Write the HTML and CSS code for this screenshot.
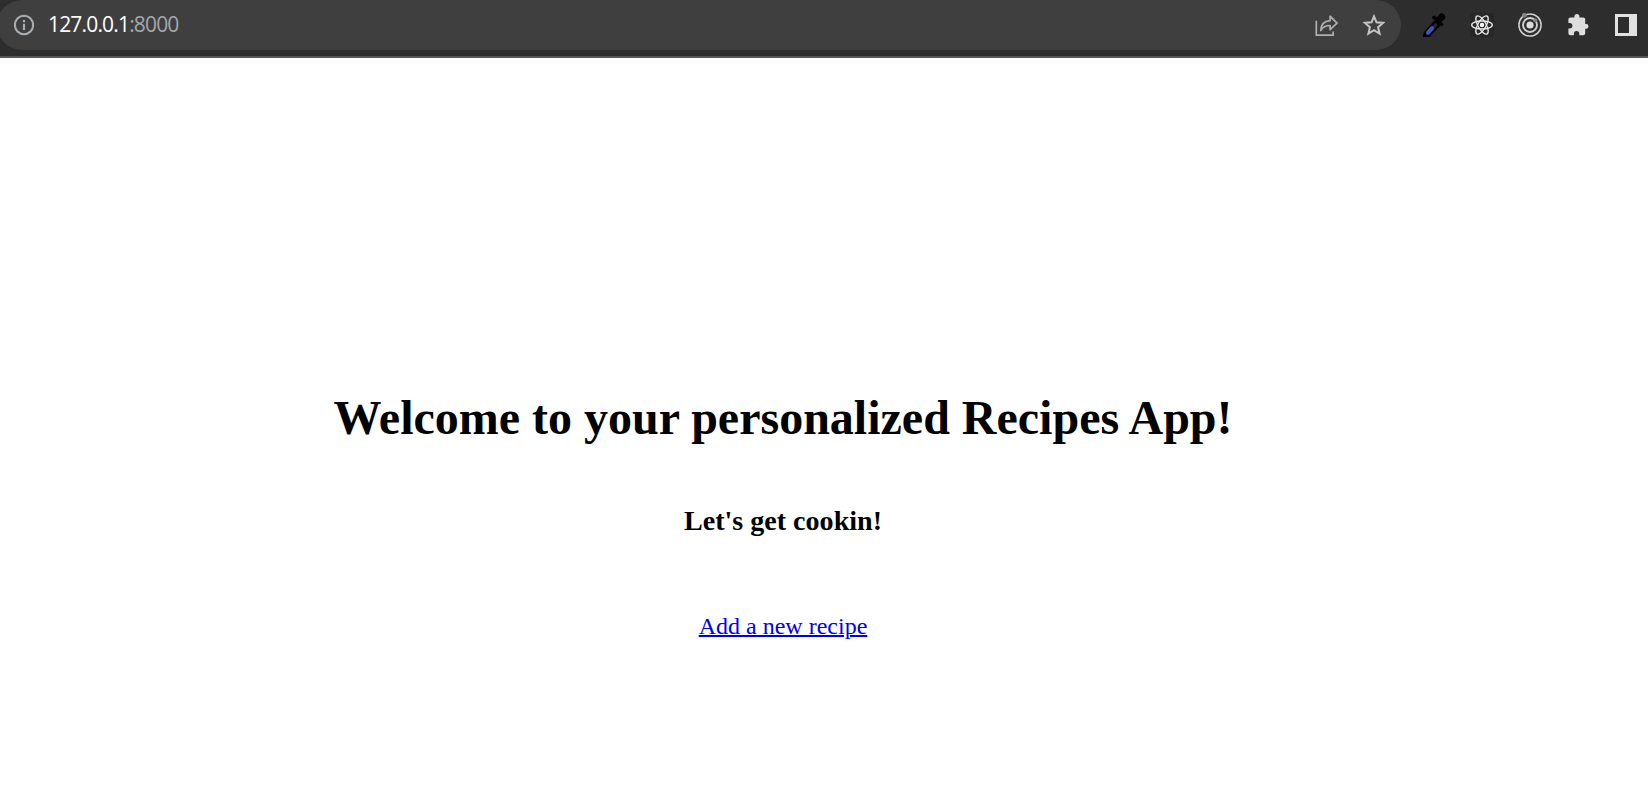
FILE: index.html
```html
<!DOCTYPE html>
<html lang="en">
<head>
<meta charset="utf-8">
<title>Recipes App</title>
<link rel="stylesheet" href="styles.css">
</head>
<body>
<header class="toolbar">
  <div class="address">
    <svg class="info" width="22" height="22" viewBox="0 0 22 22"><circle cx="11" cy="11" r="9.2" fill="none" stroke="#a9adb1" stroke-width="2.1"/><path d="M9.9 9.7h2.2v6.3h-2.2zM9.9 6h2.2v2.2h-2.2z" fill="#a9adb1"/></svg>
    <span class="url"><span class="host">127.0.0.1</span><span class="port">:8000</span></span>
    <svg class="share" width="24" height="24" viewBox="0 0 24 24" fill="none" stroke="#b0b0b0" stroke-width="1.7"><path d="M2.3 7.8V22.2H19.1V18.4"/><path d="M6.8 17.5C7 11.8 9.6 8.2 16.1 7.7V3.2L23 10.2L16.1 16.6V12.5C11.4 12.4 8.8 14.2 6.8 17.5Z" stroke-linejoin="round"/></svg>
    <svg class="star" width="24" height="24" viewBox="0 0 24 24"><path d="M12 3.3L14.5 9.3L21.1 9.9L16.1 14.2L17.6 20.7L12 17.2L6.4 20.7L7.9 14.2L2.9 9.9L9.5 9.3Z" fill="none" stroke="#c4c4c4" stroke-width="2"/></svg>
  </div>
  <div class="extensions">
    <svg width="24" height="24" viewBox="0 0 24 24"><path d="M2.3 22.9L3 19.5L13.5 8L17.4 12L7 22.9Z" fill="#25252b" stroke="#000" stroke-width="2.5"/><path d="M6.1 19.6L10 15.2" stroke="#3b56c4" stroke-width="4.2" stroke-linecap="round"/><path d="M10.5 3.5L12.5 2.4L15.2 4.2L18 .7Q20-.2 22 1.2Q24 3 22.8 5.8L19.5 9L21.6 11.5L19.8 13.4L10 5Z" fill="#000"/></svg>
    <svg width="24" height="24" viewBox="0 0 24 24"><path d="M0 0H24V24H0Z" fill="#272727"/><g fill="none" stroke="#e8e8e8" stroke-width="1.35"><ellipse cx="12" cy="12" rx="10.3" ry="4"/><ellipse cx="12" cy="12" rx="10.3" ry="4" transform="rotate(60 12 12)"/><ellipse cx="12" cy="12" rx="10.3" ry="4" transform="rotate(120 12 12)"/></g><circle cx="12" cy="12" r="2.2" fill="#fff"/></svg>
    <svg width="24" height="24" viewBox="0 0 24 24"><g fill="none" stroke="#d0d0d0"><circle cx="12" cy="12" r="11.1" stroke-width="1.5"/><circle cx="12" cy="12" r="7" stroke-width="1.9"/></g><circle cx="12" cy="12" r="3.6" fill="#dcdcdc"/><circle cx="6.4" cy="2.3" r="2.4" fill="#858585"/><circle cx="17.2" cy="7.2" r="2" fill="#858585"/></svg>
    <svg width="24" height="24" viewBox="0 0 24 24"><path d="M19.7 11H18.8V6.5C18.8 5.4 17.9 4.5 16.8 4.5H13V3.5A2.5 2.5 0 0 0 8 3.5V4.5H4C2.9 4.5 2 5.4 2 6.5V10.1H3.3A2.7 2.7 0 0 1 3.3 15.5H2V20.2C2 21.3 2.9 22.2 4 22.2H7.5V20.8A2.7 2.7 0 0 1 12.9 20.8V22.2H16.8C17.9 22.2 18.8 21.3 18.8 20.2V15.8H19.7A2.4 2.4 0 0 0 19.7 11Z" fill="#dedede" transform="translate(.4 0)"/></svg>
    <svg width="24" height="24" viewBox="0 0 24 24"><path fill="#e1e1e1" fill-rule="evenodd" d="M1 1H23V23H1ZM4 4V20H15V4Z"/></svg>
  </div>
</header>
<main class="welcome">
  <h1 class="title">Welcome to your personalized Recipes App!</h1>
  <h3 class="tagline">Let's get cookin!</h3>
  <a class="add-link" href="#">Add a new recipe</a>
</main>
</body>
</html>
```
FILE: styles.css
```css
* { box-sizing: border-box; }
body {
  margin: 0;
  height: 793px;
  overflow: hidden;
  background: #fff;
  font-family: "Liberation Serif", "Times New Roman", serif;
}
svg { display: block; flex: none; }
.toolbar {
  display: flex;
  align-items: flex-start;
  height: 58px;
  background: #2d2d2d;
  border-bottom: 2px solid #575556;
}
.address {
  display: flex;
  align-items: center;
  width: 1404px;
  height: 50px;
  margin-left: -3px;
  padding: 0 15px 0 16px;
  border-radius: 25px;
  background: #3f3f3f;
}
.url {
  margin: -2px auto 0 13px;
  font: 21px/28px "Open Sans", "Noto Sans", sans-serif;
  letter-spacing: -0.83px;
  white-space: nowrap;
}
.host { color: #fff; }
.port { color: #a5a8ab; }
.share { margin-right: 24px; }
.extensions {
  display: flex;
  gap: 24px;
  margin: 13px 0 0 21px;
}
.welcome {
  display: flex;
  flex-direction: column;
  align-items: center;
  width: 1566px;
  padding-top: 332px;
}
.title {
  margin: 0;
  font-size: 48px;
  line-height: 55px;
}
.tagline {
  margin: 60px 0 76px;
  font-size: 28.08px;
  line-height: 32px;
}
.add-link {
  color: #0000ee;
  font-size: 24px;
  line-height: 27px;
  text-decoration-thickness: 2px;
}
```
